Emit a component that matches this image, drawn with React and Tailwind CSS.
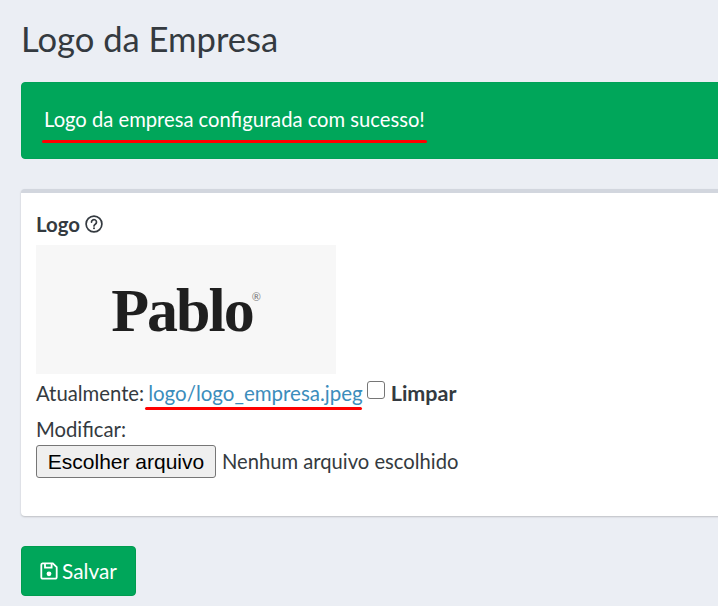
import React from 'react';

function FloppyIcon() {
  return (
    <svg width="18" height="18" viewBox="0 0 18 18" fill="none" stroke="currentColor" strokeWidth="1.8" className="shrink-0">
      <path d="M2.6 1.3h10.2l3.9 3.9v10a1.5 1.5 0 0 1-1.5 1.5H2.8a1.5 1.5 0 0 1-1.5-1.5V2.8a1.5 1.5 0 0 1 1.3-1.5z" />
      <path d="M5 1.5v4.2h6.6V1.5" />
      <circle cx="9" cy="11.8" r="2.4" fill="currentColor" stroke="none" />
    </svg>
  );
}

function HelpIcon() {
  return (
    <svg width="18" height="18" viewBox="0 0 18 18" fill="none" stroke="currentColor" strokeWidth="1.7">
      <circle cx="9" cy="9" r="7.9" />
      <path d="M6.5 7.1a2.5 2.5 0 1 1 3.8 2.1c-.8.5-1.3 1-1.3 1.8" strokeLinecap="round" />
      <circle cx="9" cy="13.2" r="1" fill="currentColor" stroke="none" />
    </svg>
  );
}

export default function App() {
  return (
    <div className="h-[606px] w-[718px] overflow-hidden bg-[#ebeef4] pl-[21px] text-[#343a40] font-['Lato','Noto_Sans',sans-serif]">
      <h1 className="h-[82px] pt-[17px] text-[34.6px] leading-[44px] font-normal">Logo da Empresa</h1>

      {/* Alerta */}
      <div className="relative mr-[-10px] h-[77px] rounded border border-[#00a157] bg-[#00a65a] pl-[22px] pt-[21px] text-[20.2px] leading-[30px] text-white">
        Logo da empresa configurada com sucesso!
        <span className="absolute left-[20px] top-[57px] h-[3px] w-[385px] rounded-full bg-[#ff0000]"></span>
      </div>

      {/* Card */}
      <div className="mr-[-10px] mt-[30px] h-[327px] rounded border-t-4 border-[#d2d6de] bg-white pl-[15px] pt-[16px] shadow-[0_1px_2px_rgba(0,0,0,0.2)]">
        <div className="flex h-[30px] items-center gap-[5px] text-[20.4px] font-bold">
          Logo <HelpIcon />
        </div>
        <div className="mt-[6px] flex h-[129px] w-[300px] items-center justify-center bg-[#f7f7f7]">
          <span className="font-['Liberation_Serif',serif] text-[62px] font-bold leading-none tracking-[-2px] text-[#1f1f1f] blur-[0.4px]">
            Pablo
          </span>
          <span className="mb-[26px] ml-[-1px] text-[11px] leading-none text-[#777777]">®</span>
        </div>
        <div className="relative mt-[4px] flex h-[30px] items-center text-[20.3px]">
          <span>Atualmente:</span>
          <a className="ml-[4px] text-[20.5px] text-[#3c8dbc]">logo/logo_empresa.jpeg</a>
          <input type="checkbox" className="mb-[6px] ml-[4px] h-[18px] w-[18px] appearance-none rounded-[3px] border border-[#767676] bg-white" />
          <span className="ml-[6px] text-[21.5px] font-bold">Limpar</span>
          <span className="absolute left-[109px] top-[29px] h-[3px] w-[217px] rounded-full bg-[#ff0000]"></span>
        </div>
        <div className="mt-[7px] h-[30px] text-[20.3px] leading-[29px]">Modificar:</div>
        <div className="flex items-center">
          <button className="h-[33px] w-[180px] rounded-[3px] border border-[#767676] bg-[#efefef] text-center font-['Liberation_Sans',sans-serif] text-[21px] text-black">
            Escolher arquivo
          </button>
          <span className="ml-[6px] text-[20.2px]">Nenhum arquivo escolhido</span>
        </div>
      </div>

      {/* Salvar */}
      <button className="mt-[30px] flex h-[50px] w-[115px] items-center justify-center gap-[4px] rounded border border-[#009c4f] bg-[#00a65a] text-[20.8px] text-white">
        <FloppyIcon />
        Salvar
      </button>
    </div>
  );
}
